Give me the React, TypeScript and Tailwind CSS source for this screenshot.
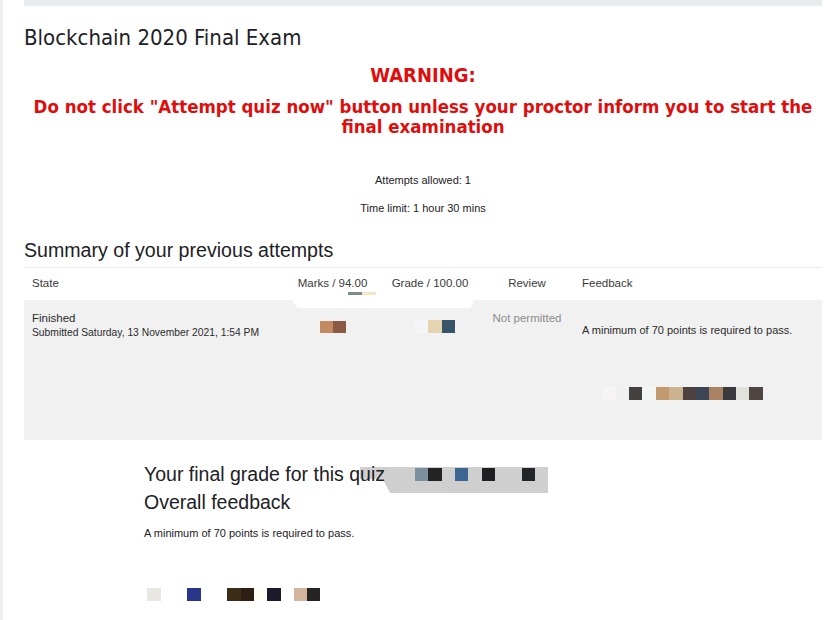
import React from "react"

const sans = "font-['Liberation_Sans',Arial,sans-serif]"
const narrow = "font-['Liberation_Sans_Narrow','DejaVu_Sans_Condensed','Liberation_Sans',sans-serif]"

type Block = { w: number; c: string }

// redaction squares, left to right
const marksBlocks: Block[] = [
  { w: 13, c: "#c38a62" },
  { w: 13, c: "#8c5a44" },
]
const gradeBlocks: Block[] = [
  { w: 13, c: "#f4f5f7" },
  { w: 14, c: "#e6d3b0" },
  { w: 13, c: "#375468" },
]
const feedbackBlocks: Block[] = [
  { w: 13, c: "#f6f4f4" },
  { w: 13, c: "#f0f0f0" },
  { w: 13, c: "#454040" },
  { w: 14, c: "#f2f6f4" },
  { w: 13, c: "#c39a70" },
  { w: 14, c: "#cdb28f" },
  { w: 13, c: "#4e4240" },
  { w: 13, c: "#3c4656" },
  { w: 14, c: "#a98262" },
  { w: 13, c: "#3a393b" },
  { w: 13, c: "#e2e2dc" },
  { w: 14, c: "#4f4642" },
]
const bottomBlocks: Block[] = [
  { w: 14, c: "#e8e7e2" },
  { w: 26, c: "transparent" },
  { w: 14, c: "#27358a" },
  { w: 26, c: "transparent" },
  { w: 14, c: "#3c2c16" },
  { w: 13, c: "#2e1e14" },
  { w: 13, c: "#fffdf4" },
  { w: 14, c: "#1e1a2e" },
  { w: 13, c: "transparent" },
  { w: 13, c: "#d4b59b" },
  { w: 13, c: "#242424" },
]
const finalGradeBlocks: Block[] = [
  { w: 13, c: "#7a909e" },
  { w: 14, c: "#232323" },
  { w: 13, c: "transparent" },
  { w: 13, c: "#3d6591" },
  { w: 14, c: "transparent" },
  { w: 13, c: "#1f1f23" },
  { w: 27, c: "transparent" },
  { w: 13, c: "#222428" },
]

const Blocks = ({ items, h = 13 }: { items: Block[]; h?: number }) => (
  <div className="flex">
    {items.map((b, i) => (
      <div key={i} style={{ width: b.w, height: h, background: b.c }} />
    ))}
  </div>
)

export default function App() {
  return (
    <div className={`relative w-[831px] h-[620px] overflow-hidden bg-white border-l-[3px] border-[#efefef] ${sans}`}>
      <div className="pl-[21px] pr-[9px]">
        <div className="h-[6px] bg-[#e9ecef]" />

        <h2 className={`mt-[20px] leading-[24px] text-[22px] font-light text-[#1d2125] ${narrow}`}>
          Blockchain 2020 Final Exam
        </h2>

        <div className={`text-center text-[#e00d0d] font-bold ${narrow}`}>
          <p className="mt-[13px] leading-[24px] text-[20px]">WARNING:</p>
          <p className="mt-[10px] leading-[20px] text-[18.5px]">
            Do not click "Attempt quiz now" button unless your proctor inform you to start the final examination
          </p>
        </div>

        <div className="text-center text-[11px] text-[#1d2125]">
          <p className="mt-[35px] leading-[16px]">Attempts allowed: 1</p>
          <p className="mt-[12px] leading-[16px]">Time limit: 1 hour 30 mins</p>
        </div>

        <h3 className="mt-[22px] leading-[24px] text-[19.6px] text-[#1d2125]">Summary of your previous attempts</h3>

        <div className="relative mt-[5px] border-t border-[#eeeeee] text-[11.5px]">
          <div className="flex h-[32px] items-center text-[#3a3a3a]">
            <div className="w-[265px] pl-[8px]">State</div>
            <div className="w-[87px] text-center">Marks / 94.00</div>
            <div className="w-[108px] text-center">Grade / 100.00</div>
            <div className="w-[86px] text-center">Review</div>
            <div className="pl-[12px]">Feedback</div>
          </div>

          <div className="flex h-[140px] bg-[#f1f1f1] text-[#2b2b2b]">
            <div className="w-[265px] pl-[8px] pt-[11px]">
              <p className="leading-[14px]">Finished</p>
              <p className="leading-[16px] text-[10.3px]">Submitted Saturday, 13 November 2021, 1:54 PM</p>
            </div>
            <div className="relative z-10 w-[87px] flex justify-center pt-[21px]">
              <Blocks items={marksBlocks} h={12} />
            </div>
            <div className="relative z-10 w-[108px] flex justify-center pl-[10px] pt-[20px]">
              <Blocks items={gradeBlocks} />
            </div>
            <div className="w-[86px] text-center pt-[11px] text-[#8c8c8c] leading-[14px]">Not permitted</div>
            <div className="flex-1 pl-[12px] pt-[23px]">
              <p className="leading-[14px] text-[11px]">A minimum of 70 points is required to pass.</p>
              <div className="mt-[50px] ml-[21px]">
                <Blocks items={feedbackBlocks} />
              </div>
            </div>
          </div>

          {/* white redaction smear under the marks / grade headers */}
          <div className="absolute left-[268px] top-[32px] w-[182px] h-[8px] bg-white [clip-path:polygon(0_0,100%_0,98%_100%,3%_100%)]" />
          <div className="absolute left-[324px] top-[24px] flex">
            <div className="w-[14px] h-[3px] bg-[#7d8c88]" />
            <div className="w-[14px] h-[3px] bg-[#f2e6c4]" />
          </div>
        </div>

        <div className="relative pt-[22px] pl-[120px] text-[#1d2125]">
          {/* grey redaction over the grade value */}
          <div className="absolute left-[336px] top-[27px] w-[188px] h-[26px] bg-[#cfcfcf] [clip-path:polygon(0_0,100%_0,100%_100%,16%_100%,12%_45%,0_45%)]">
            <div className="pl-[55px] pt-[1px]">
              <Blocks items={finalGradeBlocks} />
            </div>
          </div>

          <p className="relative leading-[24px] text-[19.5px]">Your final grade for this quiz</p>
          <p className="relative mt-[4px] leading-[24px] text-[19.5px]">Overall feedback</p>
          <p className="mt-[11px] leading-[16px] text-[11px]">A minimum of 70 points is required to pass.</p>
          <div className="mt-[47px] ml-[3px]">
            <Blocks items={bottomBlocks} />
          </div>
        </div>
      </div>
    </div>
  )
}
